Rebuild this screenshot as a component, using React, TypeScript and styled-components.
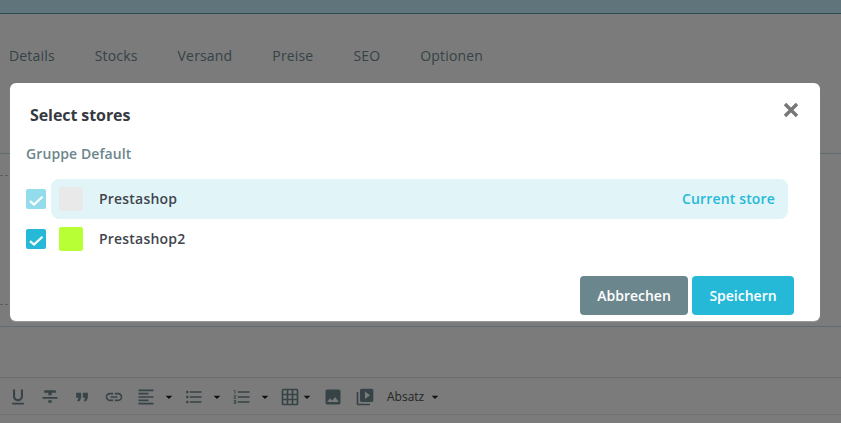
import React from "react";
import styled, { createGlobalStyle } from "styled-components";
import {
  MdArrowDropDown,
  MdFormatAlignLeft,
  MdFormatListBulleted,
  MdFormatListNumbered,
  MdFormatQuote,
  MdFormatStrikethrough,
  MdFormatUnderlined,
  MdGridOn,
  MdImage,
  MdLink,
  MdVideoLibrary,
} from "react-icons/md";

const TABS = ["Details", "Stocks", "Versand", "Preise", "SEO", "Optionen"];

const STORES = [
  { name: "Prestashop", color: "#e9e9e9", current: true },
  { name: "Prestashop2", color: "#b9ff36", current: false },
];

export default function App() {
  return (
    <UIPage>
      <GlobalStyle />
      <UITopBar />
      <UITabs>
        {TABS.map((tab) => (
          <UITab key={tab}>{tab}</UITab>
        ))}
      </UITabs>
      <UIEditorBody>
        <UIDropZone />
      </UIEditorBody>
      <UIEditorGap />
      <UIToolbar>
        <UITool><MdFormatUnderlined /></UITool>
        <UITool><MdFormatStrikethrough /></UITool>
        <UITool><MdFormatQuote /></UITool>
        <UITool><MdLink /></UITool>
        <UITool><MdFormatAlignLeft /></UITool>
        <UICaret><MdArrowDropDown /></UICaret>
        <UITool><MdFormatListBulleted /></UITool>
        <UICaret><MdArrowDropDown /></UICaret>
        <UITool><MdFormatListNumbered /></UITool>
        <UICaret><MdArrowDropDown /></UICaret>
        <UITool><MdGridOn /></UITool>
        <UICaret $tight><MdArrowDropDown /></UICaret>
        <UITool><MdImage /></UITool>
        <UITool><MdVideoLibrary /></UITool>
        <UIFormat>Absatz</UIFormat>
        <UICaret><MdArrowDropDown /></UICaret>
      </UIToolbar>

      <UIOverlay />

      <UIModal>
        <UIHead>
          <UITitle>Select stores</UITitle>
          <UIClose aria-label="Close">
            <svg viewBox="0 0 16 16" width="16" height="16">
              <path d="M2 2 L14 14 M14 2 L2 14" stroke="#777" strokeWidth="3.4" fill="none" />
            </svg>
          </UIClose>
        </UIHead>
        <UIGroup>Gruppe Default</UIGroup>
        <UIStores>
          {STORES.map((store) => (
            <UIStoreRow key={store.name}>
              <UICheck $disabled={store.current}>
                <svg viewBox="0 0 20 20" width="20" height="20">
                  <path d="M4 12.2 L8 15.6 L16.5 7.8" stroke="#fff" strokeWidth="2.2" fill="none" />
                </svg>
              </UICheck>
              <UIStore $current={store.current}>
                <UISwatch $color={store.color} />
                <UIStoreName>{store.name}</UIStoreName>
                {store.current && <UICurrent>Current store</UICurrent>}
              </UIStore>
            </UIStoreRow>
          ))}
        </UIStores>
        <UIFooter>
          <UIButton $color="#6c868e">Abbrechen</UIButton>
          <UIButton $color="#25b9d7" $wide={102}>Speichern</UIButton>
        </UIFooter>
      </UIModal>
    </UIPage>
  );
}

const GlobalStyle = createGlobalStyle`
  html, body {
    margin: 0;
    padding: 0;
    background: #f6f6f6;
  }
  body {
    font-family: "Open Sans", "Noto Sans", sans-serif;
  }
`;

const UIPage = styled.div`
  position: relative;
  width: 841px;
  height: 423px;
  overflow: hidden;
  background: #f6f6f6;
`;

const UITopBar = styled.div`
  height: 13px;
  background: #beeaf6;
  border-bottom: 1px solid #4d9aa8;
`;

const UITabs = styled.div`
  display: flex;
  gap: 40px;
  height: 140px;
  padding: 32px 0 0 9px;
  box-sizing: border-box;
  border-bottom: 1px solid #bbdbe0;
`;

const UITab = styled.div`
  font-size: 14px;
  line-height: 20px;
  letter-spacing: 0.17px;
  color: #6c868e;
`;

const UIEditorBody = styled.div`
  height: 173px;
  padding-top: 21px;
  box-sizing: border-box;
  border-bottom: 1px solid #bbdbe0;
`;

const UIDropZone = styled.div`
  width: 800px;
  height: 130px;
  box-sizing: border-box;
  border-top: 1px dashed #bbb;
  border-bottom: 1px dashed #bbb;
`;

const UIEditorGap = styled.div`
  height: 51px;
  box-sizing: border-box;
  border-bottom: 1px solid #d4d8d9;
`;

const UIToolbar = styled.div`
  display: flex;
  align-items: center;
  height: 37px;
  padding: 1px 0 0 8px;
  box-sizing: border-box;
  border-bottom: 1px solid #e0e3e4;
`;

const UITool = styled.div`
  display: flex;
  align-items: center;
  justify-content: center;
  flex: none;
  width: 20px;
  height: 20px;
  margin-right: 12px;
  font-size: 20px;
  color: #6c868e;
`;

const UICaret = styled.div<{ $tight?: boolean }>`
  display: flex;
  align-items: center;
  justify-content: center;
  flex: none;
  width: 16px;
  margin: ${(props) => (props.$tight ? "0 8px 0 -13px" : "0 7px 0 -7px")};
  font-size: 20px;
  color: #222;
`;

const UIFormat = styled.div`
  margin-right: 10px;
  font-size: 12px;
  color: #4a4a4a;
`;

const UIOverlay = styled.div`
  position: absolute;
  inset: 0;
  background: rgba(0, 0, 0, 0.5);
`;

const UIModal = styled.div`
  position: absolute;
  top: 83px;
  left: 10px;
  width: 810px;
  height: 238px;
  box-sizing: border-box;
  padding: 0 26px 6px 16px;
  display: flex;
  flex-direction: column;
  background: #fff;
  border-radius: 6px;
  box-shadow: 0 1px 1px rgba(255, 255, 255, 0.25);
`;

const UIHead = styled.div`
  display: flex;
  align-items: center;
  justify-content: space-between;
  height: 54px;
  padding: 10px 0 0 4px;
  box-sizing: border-box;
  margin-right: -5px;
`;

const UITitle = styled.div`
  font-size: 16px;
  font-weight: 700;
  letter-spacing: -0.08px;
  color: #363a41;
`;

const UIClose = styled.div`
  display: flex;
  margin-top: -10px;
`;

const UIGroup = styled.div`
  font-size: 14px;
  font-weight: 600;
  line-height: 20px;
  letter-spacing: 0.1px;
  color: #6c868e;
  margin-top: 7px;
`;

const UIStores = styled.div`
  display: flex;
  flex-direction: column;
  margin-top: 15px;
`;

const UIStoreRow = styled.div`
  display: flex;
  align-items: center;
  height: 40px;
  gap: 5px;
`;

const UICheck = styled.div<{ $disabled?: boolean }>`
  display: flex;
  width: 20px;
  height: 20px;
  border-radius: 2px;
  background: ${(props) => (props.$disabled ? "#92dceb" : "#25b9d7")};
`;

const UIStore = styled.div<{ $current?: boolean }>`
  display: flex;
  align-items: center;
  flex: 1;
  height: 40px;
  padding: 0 13px 0 8px;
  border-radius: 8px;
  margin-right: 6px;
  background: ${(props) => (props.$current ? "#e1f5f9" : "transparent")};
`;

const UISwatch = styled.div<{ $color: string }>`
  width: 24px;
  height: 24px;
  border-radius: 2px;
  background: ${(props) => props.$color};
`;

const UIStoreName = styled.div`
  flex: 1;
  margin-left: 16px;
  padding-bottom: 2px;
  font-size: 14px;
  font-weight: 600;
  letter-spacing: 0.2px;
  color: #41454c;
`;

const UICurrent = styled.div`
  padding-bottom: 2px;
  font-size: 14px;
  font-weight: 600;
  letter-spacing: 0.16px;
  color: #25b9d7;
`;

const UIFooter = styled.div`
  display: flex;
  justify-content: flex-end;
  gap: 4px;
  margin-top: auto;
`;

const UIButton = styled.div<{ $color: string; $wide?: number }>`
  display: flex;
  align-items: center;
  justify-content: center;
  width: ${(props) => props.$wide ?? 108}px;
  height: 39px;
  border-radius: 4px;
  font-size: 14px;
  font-weight: 600;
  color: #fff;
  background: ${(props) => props.$color};
`;
